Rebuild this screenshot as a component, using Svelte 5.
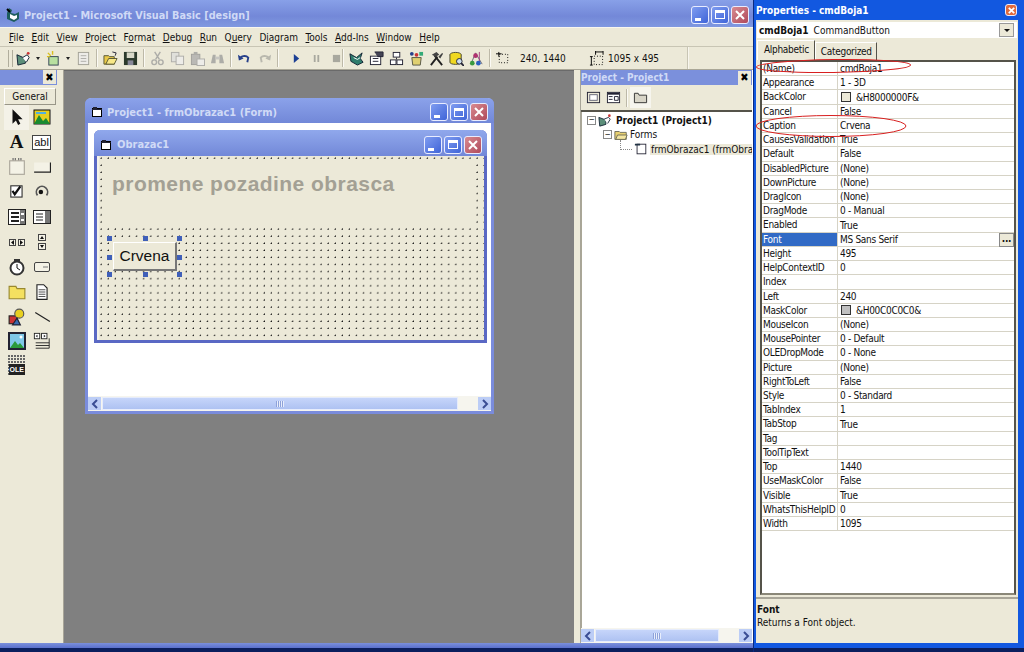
<script>
	const menus = [
		['F', 'ile'], ['E', 'dit'], ['V', 'iew'], ['P', 'roject'], ['Fo', 'rmat', 'o'], ['D', 'ebug'], ['R', 'un'],
		['Qu', 'ery', 'u'], ['Di', 'agram', 'i'], ['T', 'ools'], ['A', 'dd-Ins'], ['W', 'indow'], ['H', 'elp']
	];

	const props = [
		['(Name)', 'cmdBoja1'], ['Appearance', '1 - 3D'], ['BackColor', '&H8000000F&', '#ece9d8'], ['Cancel', 'False'],
		['Caption', 'Crvena'], ['CausesValidation', 'True'], ['Default', 'False'], ['DisabledPicture', '(None)'],
		['DownPicture', '(None)'], ['DragIcon', '(None)'], ['DragMode', '0 - Manual'], ['Enabled', 'True'],
		['Font', 'MS Sans Serif'], ['Height', '495'], ['HelpContextID', '0'], ['Index', ''], ['Left', '240'],
		['MaskColor', '&H00C0C0C0&', '#c0c0c0'], ['MouseIcon', '(None)'], ['MousePointer', '0 - Default'],
		['OLEDropMode', '0 - None'], ['Picture', '(None)'], ['RightToLeft', 'False'], ['Style', '0 - Standard'],
		['TabIndex', '1'], ['TabStop', 'True'], ['Tag', ''], ['ToolTipText', ''], ['Top', '1440'],
		['UseMaskColor', 'False'], ['Visible', 'True'], ['WhatsThisHelpID', '0'], ['Width', '1095']
	];
</script>

{#snippet caption()}
	<div class="caps">
		<span class="cap blue"><i class="min"></i></span>
		<span class="cap blue"><i class="max"></i></span>
		<span class="cap red">
			<svg viewBox="0 0 12 12" width="12" height="12"><path d="M2 2l8 8M10 2l-8 8" stroke="#fff" stroke-width="2" /></svg>
		</span>
	</div>
{/snippet}

{#snippet formIcon()}
	<svg viewBox="0 0 12 12" width="12" height="12"><rect x="1.500" y="2.500" width="9" height="8" fill="#fff" stroke="#000" /><path d="M1 3h10v1H1zM2 1h4v2H2z" fill="#223" /></svg>
{/snippet}

{#snippet hscroll()}
	<div class="hscroll">
		<span class="arrow"><svg viewBox="0 0 8 10" width="8" height="10"><path d="M6 1L2 5l4 4" fill="none" stroke="#3a4d94" stroke-width="2" /></svg></span>
		<span class="thumb"><i></i></span>
		<span class="track"></span>
		<span class="arrow"><svg viewBox="0 0 8 10" width="8" height="10"><path d="M2 1l4 4-4 4" fill="none" stroke="#3a4d94" stroke-width="2" /></svg></span>
	</div>
{/snippet}

<div class="screen">
	<div class="main">
		<header class="titlebar">
			<svg viewBox="0 0 16 16" width="16" height="16"><path d="M4 1l3 2-1 3 4 1 4-2v7l-5 3-7-3V6z" fill="#1e5d5d" /><path d="M5 7l4 2 3-1v3l-3 2-4-2z" fill="#fff" /><path d="M2 2l3 3" stroke="#000" stroke-width="2" /></svg>
			<span class="title">Project1 - Microsoft Visual Basic [design]</span>
			<div class="spacer"></div>
			{@render caption()}
		</header>

		<nav class="menubar">
			{#each menus as m}
				<span class="menu">
					{#if m[2]}{m[0][0]}<u>{m[2]}</u>{m[1]}{:else}<u>{m[0]}</u>{m[1]}{/if}
				</span>
			{/each}
		</nav>

		<div class="toolbar">
			<div class="grip"></div>
			<div class="group first">
				<svg class="ti" viewBox="0 0 16 16"><path d="M1 4l9 4v5l-8 2z" fill="#5c8f7a" stroke="#123" /><path d="M7 7l5-3 2 3-3 5" fill="#fff" stroke="#123" /><circle cx="13" cy="2.500" r="1.500" fill="#c33" /></svg>
				<span class="drop"></span>
				<svg class="ti" viewBox="0 0 16 16"><rect x="3" y="6" width="10" height="9" fill="#b8e0a0" stroke="#345" /><path d="M2 2l3 3M7 0v4M1 6h3" stroke="#d8c020" stroke-width="1.500" /></svg>
				<span class="drop"></span>
				<svg class="ti dim" viewBox="0 0 16 16"><rect x="2.500" y="1.500" width="11" height="13" fill="#eee" stroke="#8a8a80" /><path d="M5 5h6M5 8h6M5 11h6" stroke="#999" /></svg>
			</div>
			<div class="sep"></div>
			<div class="group">
				<svg class="ti" viewBox="0 0 16 16"><path d="M1 5h5l1 1h5v8H1z" fill="#e8c848" stroke="#553" /><path d="M3 14l3-6h9l-3 6z" fill="#f8e888" stroke="#553" /><path d="M10 1l4 1-1 3" fill="none" stroke="#223" /></svg>
				<svg class="ti" viewBox="0 0 16 16"><path d="M1 1h14v14H1z" fill="#2c3a2c" /><rect x="4" y="1.500" width="8" height="6" fill="#d8d8c8" /><rect x="5" y="10" width="6" height="5" fill="#889" /></svg>
			</div>
			<div class="sep"></div>
			<div class="group">
				<svg class="ti dim" viewBox="0 0 16 16"><path d="M5 1l5 8M11 1L6 9" stroke="#999" stroke-width="1.500" /><circle cx="4.500" cy="12" r="2.500" fill="none" stroke="#999" stroke-width="1.500" /><circle cx="11.500" cy="12" r="2.500" fill="none" stroke="#999" stroke-width="1.500" /></svg>
				<svg class="ti dim" viewBox="0 0 16 16"><rect x="1.500" y="1.500" width="8" height="10" fill="#ddd" stroke="#999" /><rect x="6.500" y="5.500" width="8" height="9" fill="#eee" stroke="#999" /></svg>
				<svg class="ti dim" viewBox="0 0 16 16"><rect x="1.500" y="3.500" width="9" height="11" fill="#aaa" stroke="#888" /><rect x="7.500" y="8.500" width="8" height="7" fill="#eee" stroke="#999" /><rect x="4" y="1" width="4" height="3" fill="#999" /></svg>
				<svg class="ti dim" viewBox="0 0 16 16"><path d="M1 13l2-9h3v9zM15 13l-2-9h-3v9z" fill="#999" /><rect x="6" y="6" width="4" height="3" fill="#bbb" /></svg>
			</div>
			<div class="sep"></div>
			<div class="group">
				<svg class="ti" viewBox="0 0 16 16"><path d="M3 9a5 4 0 0 1 9-2l-1 5" fill="none" stroke="#27408b" stroke-width="2" /><path d="M1 4l1 6 5-2z" fill="#27408b" /></svg>
				<svg class="ti dim" viewBox="0 0 16 16"><path d="M13 9a5 4 0 0 0-9-2l1 5" fill="none" stroke="#a8a8a0" stroke-width="2" /><path d="M15 4l-1 6-5-2z" fill="#a8a8a0" /></svg>
			</div>
			<div class="sep"></div>
			<div class="group run">
				<svg class="ti sm" viewBox="0 0 10 10"><path d="M2 0l6 5-6 5z" fill="#1c3f94" /></svg>
				<svg class="ti sm" viewBox="0 0 10 10"><path d="M2 1h2v8H2zM6 1h2v8H6z" fill="#a8a89e" /></svg>
				<svg class="ti sm" viewBox="0 0 10 10"><rect x="1" y="1" width="8" height="8" fill="#a8a89e" /></svg>
			</div>
			<div class="sep"></div>
			<div class="group">
				<svg class="ti" viewBox="0 0 16 16"><path d="M1 3l7 4 6-5-2 6 3 4-6 3-7-4z" fill="#2f7d6d" stroke="#123" /><path d="M5 7l4 2 3-2" stroke="#fff" fill="none" /></svg>
				<svg class="ti" viewBox="0 0 16 16"><rect x="1.500" y="5.500" width="11" height="9" fill="#fff" stroke="#223" /><path d="M4 8h6M4 11h6" stroke="#223" /><path d="M6 1h9v5H9" fill="#445" stroke="#223" /></svg>
				<svg class="ti" viewBox="0 0 16 16"><rect x="4.500" y="1.500" width="7" height="5" fill="#fff" stroke="#223" /><rect x="1.500" y="9.500" width="6" height="5" fill="#fff" stroke="#223" /><rect x="8.500" y="9.500" width="6" height="5" fill="#fff" stroke="#223" /><path d="M8 7v2" stroke="#223" /></svg>
				<svg class="ti" viewBox="0 0 16 16"><path d="M3 7h10l-1 8H4z" fill="#e0d070" stroke="#554" /><circle cx="3" cy="3" r="2" fill="#27408b" /><circle cx="8" cy="4" r="2" fill="#c33" /><rect x="11" y="1" width="4" height="4" fill="#3a7" /></svg>
				<svg class="ti" viewBox="0 0 16 16"><path d="M2 15L9 6M14 15L6 5" stroke="#222" stroke-width="2" /><path d="M3 4l5-3 3 3-4 2zM10 6l4-4 1 1-3 5z" fill="#444" /></svg>
				<svg class="ti" viewBox="0 0 16 16"><ellipse cx="7" cy="4" rx="6" ry="2.500" fill="#f0d820" stroke="#443" /><path d="M1 4v8c0 3 12 3 12 0V4" fill="#f0d820" stroke="#443" /><circle cx="11" cy="11" r="3" fill="#cde" stroke="#223" /><path d="M13 13l3 3" stroke="#223" stroke-width="2" /></svg>
				<svg class="ti" viewBox="0 0 16 16"><path d="M2 14L7 2l7 12" fill="none" stroke="#667" /><path d="M11 1v13" stroke="#a04080" /><circle cx="7" cy="5" r="2.500" fill="#b03070" /><circle cx="3.500" cy="13" r="2.500" fill="#3a9a40" /><circle cx="10" cy="13" r="2.500" fill="#2a60c0" /></svg>
			</div>
			<div class="sep"></div>
			<svg class="ti" viewBox="0 0 16 16"><path d="M3 1v5M0 3h6" stroke="#000" /><rect x="3.500" y="3.500" width="9" height="9" fill="none" stroke="#000" stroke-dasharray="1 2" /></svg>
			<span class="coord pos">240, 1440</span>
			<svg class="ti" viewBox="0 0 16 16"><path d="M7 1h8M15 0v4M7 0v4" stroke="#000" /><rect x="5.500" y="5.500" width="9" height="9" fill="none" stroke="#000" stroke-dasharray="1 2" /><path d="M1 6h3M2.500 6v9M1 15h3" stroke="#000" /></svg>
			<span class="coord">1095 x 495</span>
			<div class="barend"></div>
		</div>

		<div class="workspace">
			<aside class="toolbox">
				<div class="tb-head"><span class="x">✖</span></div>
				<div class="tb-tab">General</div>
				<div class="tools">
					<span class="tool active"><svg viewBox="0 0 16 16"><path d="M4 1v13l3-3 2 4 2-1-2-4h4z" fill="#111" /></svg></span>
					<span class="tool"><svg viewBox="0 0 18 16"><rect x="1" y="1" width="16" height="14" fill="#e8d020" stroke="#111" /><path d="M1 15l5-9 4 6 3-3 4 6z" fill="#1a8a30" /><path d="M3 3h10v2H3z" fill="#50b0e0" /></svg></span>
					<span class="tool glyph">A</span>
					<span class="tool"><span class="abl">abl</span></span>
					<span class="tool"><svg viewBox="0 0 16 16"><rect x="1.500" y="2.500" width="13" height="12" fill="#f4f2e6" stroke="#aaa59a" /><path d="M4 1h3M9 1h3" stroke="#666" stroke-width="2" stroke-dasharray="1 1" /></svg></span>
					<span class="tool"><svg viewBox="0 0 16 16"><rect x="1" y="4" width="14" height="8" fill="#f4f2e6" /><path d="M1 12.500h14.500V4" fill="none" stroke="#222" /></svg></span>
					<span class="tool"><svg viewBox="0 0 16 16"><rect x="2.500" y="2.500" width="10" height="10" fill="#fff" stroke="#333" /><path d="M4 7l2 3 5-7" fill="none" stroke="#111" stroke-width="2" /></svg></span>
					<span class="tool"><svg viewBox="0 0 16 16"><path d="M4 11a5 5 0 1 1 8 0" fill="none" stroke="#555" stroke-width="1.500" /><circle cx="7" cy="8" r="2" fill="#111" /></svg></span>
					<span class="tool"><svg viewBox="0 0 18 18"><rect x="0.500" y="1.500" width="17" height="15" fill="#fff" stroke="#222" /><path d="M3 5h8M3 9h8M3 13h8" stroke="#222" stroke-width="2" /><rect x="12" y="2" width="5" height="14" fill="#777" /><path d="M13 6h3M13 12h3" stroke="#fff" stroke-width="2" /></svg></span>
					<span class="tool"><svg viewBox="0 0 18 18"><rect x="0.500" y="2.500" width="17" height="13" fill="#fff" stroke="#222" /><path d="M3 6h7M3 9h7M3 12h7" stroke="#222" /><rect x="12" y="3" width="5" height="12" fill="#777" /></svg></span>
					<span class="tool"><svg viewBox="0 0 18 16"><rect x="1.500" y="5.500" width="6" height="6" fill="#f4f2e6" stroke="#444" /><rect x="10.500" y="5.500" width="6" height="6" fill="#f4f2e6" stroke="#444" /><path d="M6 6v5L3 8.500zM12 6v5l3-2.500z" fill="#111" /></svg></span>
					<span class="tool"><svg viewBox="0 0 16 18"><rect x="4.500" y="1.500" width="7" height="6" fill="#f4f2e6" stroke="#444" /><rect x="4.500" y="10.500" width="7" height="6" fill="#f4f2e6" stroke="#444" /><path d="M6 6h4L8 3zM6 12h4l-2 3z" fill="#111" /></svg></span>
					<span class="tool"><svg viewBox="0 0 16 18"><circle cx="8" cy="10" r="6.500" fill="#fff" stroke="#333" stroke-width="2" /><path d="M8 6v4l3 2" fill="none" stroke="#111" /><path d="M5 1h6v2H5z" fill="#333" /></svg></span>
					<span class="tool"><svg viewBox="0 0 18 16"><rect x="1.500" y="3.500" width="15" height="9" rx="1.500" fill="#f4f2e6" stroke="#444" /><path d="M10 8h5" stroke="#777" /></svg></span>
					<span class="tool"><svg viewBox="0 0 16 16"><path d="M1 3h6l1 2h7v9H1z" fill="#f4e060" stroke="#998830" /></svg></span>
					<span class="tool"><svg viewBox="0 0 16 16"><path d="M3.500 1.500h6l3 3v10h-9z" fill="#fff" stroke="#222" /><path d="M5 6h6M5 8h6M5 10h6M5 12h6" stroke="#555" /></svg></span>
					<span class="tool"><svg viewBox="0 0 16 16"><rect x="1" y="7" width="7" height="7" fill="#c33" stroke="#222" /><circle cx="10" cy="5" r="4" fill="#e8d020" stroke="#555" /><path d="M8 9l3 6H4z" fill="#3a6ab0" stroke="#223" /></svg></span>
					<span class="tool"><svg viewBox="0 0 16 16"><path d="M2 4l13 8" stroke="#222" /></svg></span>
					<span class="tool"><svg viewBox="0 0 18 18"><rect x="1" y="1" width="16" height="16" fill="#7fc8e8" stroke="#223" stroke-width="2" /><path d="M2 16l5-7 3 4 2-2 4 5z" fill="#2a9a3a" /><circle cx="13" cy="5" r="1.500" fill="#fff" /></svg></span>
					<span class="tool"><svg viewBox="0 0 20 20"><rect x="1.500" y="1.500" width="6" height="6" fill="#fff" stroke="#222" /><rect x="9.500" y="1.500" width="6" height="6" fill="#fff" stroke="#222" /><path d="M3 12h15M3 15h15M3 18h15M18 7v11" stroke="#222" /><path d="M5 3v3L3 4.500zM12 3v3l2-1.500z" fill="#222" /></svg></span>
					<span class="tool"><span class="ole"><b>OLE</b></span></span>
				</div>
			</aside>

			<main class="mdi">
				<section class="window">
					<div class="win-title">
						{@render formIcon()}
						<span>Project1 - frmObrazac1 (Form)</span>
						<div class="spacer"></div>
						{@render caption()}
					</div>
					<div class="win-body">
						<div class="form">
							<div class="form-title">
								{@render formIcon()}
								<span>Obrazac1</span>
								<div class="spacer"></div>
								{@render caption()}
							</div>
							<div class="canvas">
								<div class="label">promene pozadine obrasca</div>
								<div class="selected">
									<button>Crvena</button>
									<i class="h tl"></i><i class="h tc"></i><i class="h tr"></i>
									<i class="h ml"></i><i class="h mr"></i>
									<i class="h bl"></i><i class="h bc"></i><i class="h br"></i>
								</div>
							</div>
						</div>
					</div>
					{@render hscroll()}
				</section>
			</main>

			<div class="sash"></div>

			<aside class="project">
				<div class="pj-head"><span>Project - Project1</span><span class="x">✖</span></div>
				<div class="pj-tools">
					<svg class="ti" viewBox="0 0 16 16"><rect x="1.500" y="2.500" width="13" height="11" fill="#ece9d8" stroke="#223" /><rect x="4" y="5" width="8" height="6" fill="#fff" stroke="#667" /></svg>
					<svg class="ti" viewBox="0 0 16 16"><rect x="1.500" y="2.500" width="13" height="11" fill="#fff" stroke="#223" /><path d="M2 3h12v2H2z" fill="#223" /><path d="M3 7h4M3 10h4M9 7h4v4H9z" stroke="#223" fill="none" /></svg>
					<div class="sep"></div>
					<span class="pressed"><svg class="ti" viewBox="0 0 16 16"><path d="M1.500 13.500v-10h4l1 2h8v8z" fill="#d8d5c8" stroke="#333" /></svg></span>
				</div>
				<div class="tree">
					<div class="node n0">
						<span class="exp">−</span>
						<svg class="ti" viewBox="0 0 16 16"><path d="M1 5l8 3v5l-7 2z" fill="#5c8f7a" stroke="#123" /><path d="M7 7l5-2 2 2-3 5" fill="#fff" stroke="#123" /><circle cx="13" cy="3" r="1.500" fill="#c33" /></svg>
						<b>Project1 (Project1)</b>
					</div>
					<div class="node n1">
						<span class="exp">−</span>
						<svg class="ti" viewBox="0 0 16 16"><path d="M1 4h5l1 1h7v8H1z" fill="#e8d070" stroke="#665" /><path d="M2 13l2-5h11l-2 5z" fill="#f4e6a0" stroke="#665" /></svg>
						<span>Forms</span>
					</div>
					<div class="node n2">
						<span class="line"></span>
						<svg class="ti" viewBox="0 0 16 16"><rect x="3.500" y="2.500" width="10" height="11" fill="#fff" stroke="#223" /><path d="M1 2h6v2H1z" fill="#234" /></svg>
						<span class="sel">frmObrazac1 (frmObrazac1)</span>
					</div>
				</div>
				{@render hscroll()}
			</aside>
		</div>
		<div class="statusgap"></div>
	</div>

	<div class="props">
		<header class="pr-title">
			<span>Properties - cmdBoja1</span>
			<span class="cap red pr-close"><svg viewBox="0 0 10 10" width="9" height="9"><path d="M2 2l6 6M8 2L2 8" stroke="#fff" stroke-width="2" /></svg></span>
		</header>
		<div class="pr-inner">
			<div class="combo"><b>cmdBoja1</b><span>CommandButton</span><i class="combo-btn"></i></div>
			<div class="tabs">
				<span class="tab on">Alphabetic</span>
				<span class="tab">Categorized</span>
			</div>
			<div class="grid">
				{#each props as p}
					<div class="row" class:cur={p[0] === 'Font'}>
						<span class="k">{p[0]}</span>
						<span class="v">
							{#if p[2]}<i class="swatch" style="background:{p[2]}"></i>{/if}{p[1]}
						</span>
						{#if p[0] === 'Font'}<span class="dots">...</span>{/if}
					</div>
				{/each}
			</div>
			<div class="desc">
				<b>Font</b>
				<span>Returns a Font object.</span>
			</div>
		</div>
		<svg class="rings" viewBox="0 0 270 160" width="270" height="160">
			<ellipse cx="79.500" cy="66" rx="77" ry="6.500" fill="none" stroke="#d82020" transform="rotate(-0.800 79.500 66)" />
			<ellipse cx="77" cy="126" rx="75" ry="10.500" fill="none" stroke="#d82020" />
		</svg>
	</div>
</div>

<style>
	:global(body) {
		margin: 0;
		background: #0a2a80;
	}

	.screen {
		display: flex;
		width: 1024px;
		height: 652px;
		overflow: hidden;
		font-family: 'DejaVu Sans Condensed', 'DejaVu Sans', sans-serif;
		font-stretch: condensed;
		font-size: 10px;
		color: #111;
	}

	.main {
		width: 753px;
		display: flex;
		flex-direction: column;
		flex: none;
		background: #7b90dc;
	}

	.spacer {
		flex: 1;
	}

	.titlebar {
		display: flex;
		align-items: center;
		gap: 3px;
		height: 27px;
		padding: 2px 4px 0 5px;
		box-sizing: border-box;
		flex: none;
		background: linear-gradient(#88a0e8, #7388d8 60%, #8098e0);
	}

	.title {
		font-size: 10.800px;
		font-weight: bold;
		color: #d0daf6;
		margin-top: 1px;
	}

	.caps {
		display: flex;
		gap: 2px;
	}

	.cap {
		display: flex;
		align-items: center;
		justify-content: center;
		width: 18px;
		height: 18px;
		border: 1px solid #e8ecff;
		border-radius: 3px;
		box-sizing: border-box;
		position: relative;
	}

	.cap.blue {
		background: linear-gradient(135deg, #7f9cf0, #3f64d8);
	}

	.cap.red {
		background: linear-gradient(135deg, #d88a90, #b04a5c);
	}

	.min {
		position: absolute;
		left: 3px;
		bottom: 2px;
		width: 6px;
		height: 3px;
		background: #fff;
	}

	.max {
		width: 10px;
		height: 9px;
		border: 1px solid #fff;
		border-top-width: 3px;
		box-sizing: border-box;
	}

	.menubar {
		display: flex;
		align-items: center;
		gap: 7.500px;
		height: 19px;
		padding: 0 0 0 9px;
		flex: none;
		background: #ece9d8;
		border-top: 1px solid #f8f6ee;
		box-sizing: border-box;
	}

	.toolbar {
		display: flex;
		align-items: center;
		height: 23px;
		flex: none;
		padding-left: 8px;
		background: #ece9d8;
		border-top: 1px solid #c8c5b4;
		box-sizing: border-box;
	}

	.grip {
		width: 3px;
		height: 17px;
		border-left: 1px solid #b0ad9c;
		border-right: 1px solid #b0ad9c;
		flex: none;
	}

	.group {
		display: flex;
		align-items: center;
		gap: 5px;
	}

	.group.first {
		margin-left: 3px;
		gap: 6px;
	}

	.group.run {
		gap: 11px;
		padding-left: 8px;
		margin-right: -4px;
	}

	.ti {
		width: 15px;
		height: 15px;
		flex: none;
	}

	.ti.sm {
		width: 9px;
		height: 9px;
	}

	.dim {
		opacity: 0.75;
	}

	.drop {
		width: 0;
		height: 0;
		margin-left: -1px;
		border: 2.500px solid transparent;
		border-top: 3px solid #222;
		border-bottom: 0;
		flex: none;
	}

	.sep {
		width: 1px;
		height: 18px;
		margin: 0 5px;
		background: #bdb9a8;
		border-right: 1px solid #fbfaf4;
		flex: none;
	}

	.coord {
		margin-left: 4px;
		white-space: nowrap;
	}

	.coord.pos {
		width: 69px;
		margin-left: 9px;
	}

	.barend {
		margin-left: 28px;
		width: 1px;
		height: 23px;
		background: #c8c5b4;
		box-shadow: 1px 0 #f8f6ee;
	}

	.workspace {
		flex: 1;
		display: flex;
		min-height: 0;
		background: #ece9d8;
		border-top: 1px solid #aaa797;
	}

	.toolbox {
		width: 57px;
		flex: none;
		padding-right: 6px;
		background: #ece9d8;
		border-right: 1px solid #a8a598;
	}

	.tb-head {
		display: flex;
		justify-content: flex-end;
		height: 15px;
		background: #7b90dc;
		padding-right: 1px;
	}

	.x {
		display: flex;
		align-items: center;
		justify-content: center;
		width: 13px;
		height: 14px;
		background: #ece9d8;
		color: #000;
		font-size: 11px;
		font-weight: bold;
	}

	.tb-tab {
		margin: 3px 0 0 4px;
		height: 15px;
		line-height: 15px;
		text-align: center;
		background: #ece9d8;
		border: 1px solid #fff;
		border-right-color: #999688;
		border-bottom-color: #999688;
		width: 50px;
	}

	.tools {
		display: grid;
		grid-template-columns: 25px 25px;
		grid-auto-rows: 24.900px;
		padding: 0 0 0 4px;
	}

	.tool {
		display: flex;
		align-items: center;
		justify-content: center;
	}

	.tool.active {
		background: #f4f2e8;
	}

	.tool svg {
		width: 18px;
		height: 18px;
	}

	.glyph {
		font: bold 19px 'Liberation Serif', serif;
	}

	.abl {
		font: 11px 'Liberation Sans', sans-serif;
		background: #fff;
		border: 1px solid #444;
		padding: 1px;
		line-height: 11px;
	}

	.ole {
		display: flex;
		align-items: flex-end;
		justify-content: flex-end;
		width: 17px;
		height: 20px;
		margin-top: -3px;
		background-image: radial-gradient(circle at 1px 1px, #666 0.8px, transparent 1px);
		background-size: 3px 3px;
	}

	.ole b {
		font: bold 7px 'Liberation Sans', sans-serif;
		background: #222;
		color: #fff;
		padding: 2px 1px;
	}

	.mdi {
		flex: 1;
		position: relative;
		background: #808080;
		border-top: 1px solid #6a6a6a;
		min-width: 0;
	}

	.window {
		position: absolute;
		left: 21px;
		top: 27px;
		width: 409px;
		height: 316px;
		display: flex;
		flex-direction: column;
		box-sizing: border-box;
		border: 3px solid #7a8cdc;
		border-top: 0;
		border-radius: 6px 6px 0 0;
		background: #fff;
	}

	.win-title {
		display: flex;
		align-items: center;
		gap: 4px;
		height: 25px;
		margin: 0 -3px;
		padding: 3px 6px 0 6px;
		box-sizing: border-box;
		flex: none;
		border-radius: 6px 6px 0 0;
		background: linear-gradient(#8ba2ea, #7288d8);
		color: #d0daf6;
		font-size: 11px;
		font-weight: bold;
	}

	.win-body {
		flex: 1;
		padding: 7px 4px 0 6px;
		min-height: 0;
	}

	.form {
		height: 213px;
		border: 3px solid #5a68c4;
		border-top: 0;
		border-radius: 6px 6px 0 0;
		display: flex;
		flex-direction: column;
		box-sizing: border-box;
	}

	.form-title {
		display: flex;
		align-items: center;
		gap: 5px;
		height: 26px;
		margin: 0 -3px;
		padding: 3px 5px 0 6px;
		box-sizing: border-box;
		flex: none;
		border-radius: 6px 6px 0 0;
		background: linear-gradient(#90a8ec, #7288d8);
		color: #d0daf6;
		font-size: 11px;
		font-weight: bold;
	}

	.canvas {
		flex: 1;
		padding: 7px 3px 0 7px;
		background-color: #ece9d8;
		background-image: radial-gradient(circle at 1px 1px, #111 0.6px, transparent 0.7px);
		background-size: 7.100px 7.100px;
		background-position: 1px 1px;
		border-left: 2px solid #f4f2e8;
	}

	.label {
		height: 60px;
		margin-right: 8px;
		background: #ece9d8;
		font: bold 21px 'Liberation Sans', sans-serif;
		letter-spacing: 0.450px;
		color: #a3a094;
		padding: 9px 0 0 6px;
		box-sizing: border-box;
		white-space: nowrap;
	}

	.selected {
		position: relative;
		margin: 19px 0 0 7px;
		width: 64px;
		height: 29px;
	}

	.selected button {
		display: block;
		width: 100%;
		height: 100%;
		padding: 0;
		font: 15.500px 'Liberation Sans', sans-serif;
		color: #111;
		background: #ece9d8;
		border: 1px solid #fff;
		border-right: 2px solid #777;
		border-bottom: 2px solid #777;
	}

	.h {
		position: absolute;
		width: 5px;
		height: 5px;
		background: #3f5fb8;
	}

	.tl, .tr, .tc { top: -6px; }
	.bl, .br, .bc { bottom: -6px; }
	.ml, .mr { top: 13px; }
	.tl, .ml, .bl { left: -6px; }
	.tr, .mr, .br { right: -5px; }
	.tc, .bc { left: 30px; }

	.hscroll {
		display: flex;
		align-items: center;
		height: 15px;
		flex: none;
		gap: 1px;
		background: #f6f5ee;
	}

	.arrow {
		display: flex;
		align-items: center;
		justify-content: center;
		width: 13px;
		height: 13px;
		background: #bccdf6;
		flex: none;
	}

	.thumb {
		flex: 1;
		height: 13px;
		display: flex;
		align-items: center;
		justify-content: center;
		background: linear-gradient(#c6d5fa, #aec2f2);
		border: 1px solid #e6ecfc;
		box-sizing: border-box;
	}

	.thumb i {
		width: 8px;
		height: 6px;
		background: repeating-linear-gradient(90deg, #8ea2da 0 1px, #e8eefc 1px 2px);
	}

	.track {
		width: 18px;
		flex: none;
	}

	.sash {
		width: 7px;
		flex: none;
		background: #ece9d8;
		border-right: 1px solid #a8a598;
		box-sizing: border-box;
	}

	.project {
		width: 172px;
		flex: none;
		display: flex;
		flex-direction: column;
		background: #fff;
		padding-right: 1px;
		box-sizing: border-box;
	}

	.pj-head {
		display: flex;
		align-items: center;
		justify-content: space-between;
		height: 15px;
		background: #7b90dc;
		color: #d0daf6;
		font-weight: bold;
		font-size: 10px;
		flex: none;
		padding-right: 1px;
	}

	.pj-tools {
		display: flex;
		align-items: center;
		height: 25px;
		gap: 5px;
		padding-left: 5px;
		background: #ece9d8;
		border-bottom: 2px solid #55534a;
		flex: none;
	}

	.pj-tools .sep {
		margin: 0;
	}

	.pressed {
		display: flex;
		padding: 3px 3px;
		background: #f6f5ee;
		margin-left: -3px;
	}

	.tree {
		flex: 1;
		overflow: hidden;
		padding-top: 1px;
		white-space: nowrap;
		border-left: 1px solid #aaa797;
	}

	.node {
		display: flex;
		align-items: center;
		height: 14.500px;
		gap: 2px;
	}

	.node .ti {
		width: 14px;
		height: 14px;
	}

	.n0 { padding-left: 5px; }
	.n1 { padding-left: 21px; }
	.n2 { padding-left: 38px; }

	.n0 b {
		margin-left: 2px;
	}

	.exp {
		display: flex;
		align-items: center;
		justify-content: center;
		width: 7px;
		height: 7px;
		border: 1px solid #888;
		font-size: 8px;
		line-height: 1;
		flex: none;
	}

	.line {
		width: 11px;
		height: 9px;
		margin-top: -9px;
		border-left: 1px dotted #888;
		border-bottom: 1px dotted #888;
		flex: none;
	}

	.sel {
		background: #ece9d8;
		padding: 0 1px;
	}

	.statusgap {
		height: 9px;
		flex: none;
		background: linear-gradient(#7b90dc, #5a70cc 5px, #0b1f5e 5px);
	}

	.props {
		position: relative;
		width: 271px;
		flex: none;
		display: flex;
		flex-direction: column;
		background: linear-gradient(#1258e0 648px, #0b1f5e 648px);
		box-sizing: border-box;
		border-left: 1px solid #0a2a80;
		padding: 0 6px 9px 2px;
	}

	.pr-title {
		display: flex;
		align-items: center;
		justify-content: space-between;
		height: 20px;
		color: #fff;
		font-weight: bold;
		font-size: 10px;
		flex: none;
		margin-right: 1px;
	}

	.pr-close {
		width: 12px;
		height: 12px;
		background: #e06a3c !important;
	}

	.pr-inner {
		flex: 1;
		display: flex;
		flex-direction: column;
		background: #ece9d8;
		min-height: 0;
		padding-top: 2px;
	}

	.combo {
		display: flex;
		align-items: center;
		gap: 5px;
		height: 16px;
		margin: 0 1px 0 1px;
		padding-left: 2px;
		background: #fff;
		position: relative;
		flex: none;
	}

	.combo-btn {
		position: absolute;
		right: 3px;
		top: 1px;
		width: 15px;
		height: 14px;
		background: #ece9d8;
		border: 1px solid #999;
		box-sizing: border-box;
	}

	.combo-btn::after {
		content: '';
		position: absolute;
		left: 4px;
		top: 5px;
		border: 3px solid transparent;
		border-top: 3px solid #111;
		border-bottom: 0;
	}

	.tabs {
		display: flex;
		height: 22px;
		padding: 2px 0 0 1px;
		box-sizing: border-box;
		flex: none;
		letter-spacing: -0.300px;
	}

	.tab {
		padding: 3px 4px 0 5px;
		height: 18px;
		box-sizing: border-box;
		margin-top: 2px;
		border-right: 1px solid #55534a;
		border-left: 1px solid #fff;
		border-top: 1px solid #fff;
	}

	.tab.on {
		margin-top: 0;
		height: 20px;
		padding: 3px 5px 0 6px;
	}

	.grid {
		flex: 1;
		margin: 0 2px 0 4px;
		background: #fff;
		border: 2px solid #55534a;
		border-bottom-color: #8a8778;
		min-height: 0;
	}

	.row {
		display: grid;
		grid-template-columns: 76px 1fr;
		height: 14.220px;
		box-sizing: border-box;
		border-bottom: 1px solid #d6d3c6;
		line-height: 13px;
		position: relative;
		white-space: nowrap;
		letter-spacing: -0.300px;
	}

	.k {
		padding-left: 1px;
		border-right: 1px solid #d6d3c6;
		overflow: hidden;
	}

	.v {
		padding-left: 2px;
		display: flex;
		align-items: center;
	}

	.swatch {
		width: 10px;
		height: 10px;
		border: 1px solid #333;
		margin: 0 5px 0 1px;
		box-sizing: border-box;
	}

	.cur .k {
		background: #316ac5;
		color: #fff;
	}

	.dots {
		position: absolute;
		right: 0;
		top: 0;
		width: 15px;
		height: 14px;
		text-align: center;
		background: #ece9d8;
		border: 1px solid #888;
		box-sizing: border-box;
		line-height: 9px;
		font-weight: bold;
	}

	.desc {
		display: flex;
		flex-direction: column;
		height: 46px;
		margin-top: 2px;
		padding: 4px 0 0 1px;
		border-top: 2px solid #a8a598;
		line-height: 13px;
		box-sizing: border-box;
		flex: none;
	}

	.rings {
		position: absolute;
		left: 0;
		top: 0;
		pointer-events: none;
	}
</style>
